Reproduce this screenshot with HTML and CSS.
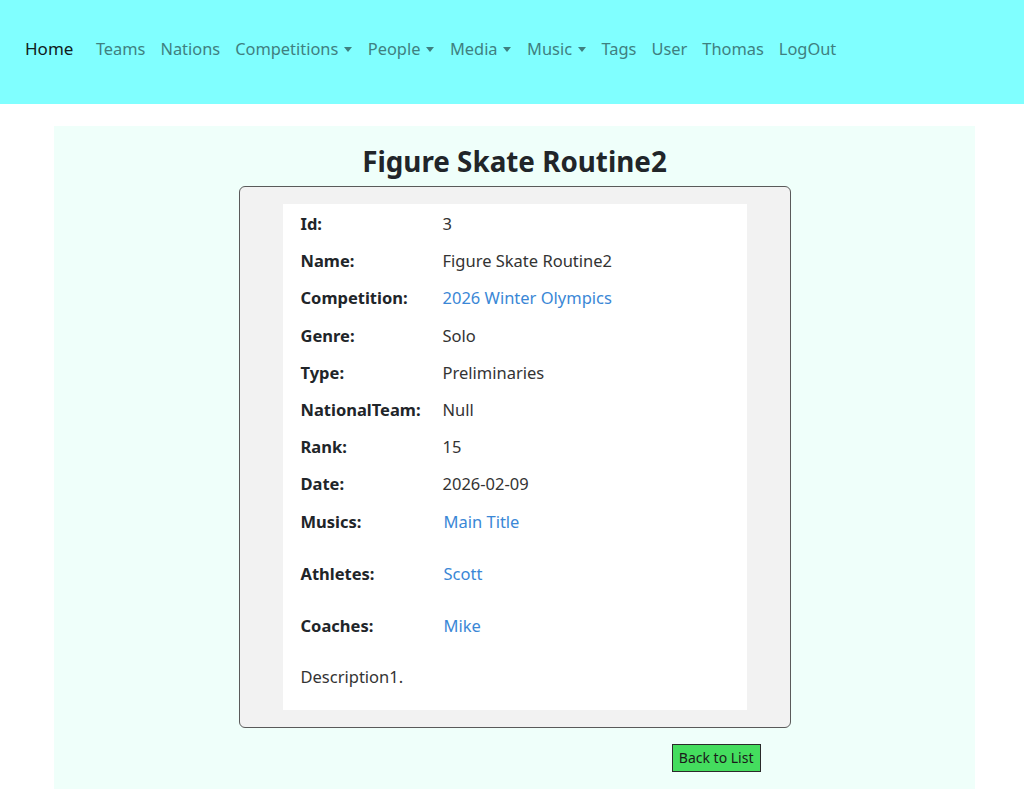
FILE: index.html
```html
<!DOCTYPE html>
<html lang="en">
<head>
<meta charset="utf-8">
<title>Figure Skate Routine2</title>
<link rel="stylesheet" href="styles.css">
</head>
<body>
<nav class="navbar">
  <a class="brand" href="#">Home</a>
  <a class="nav-link" href="#">Teams</a>
  <a class="nav-link" href="#">Nations</a>
  <a class="nav-link dropdown" href="#">Competitions</a>
  <a class="nav-link dropdown" href="#">People</a>
  <a class="nav-link dropdown" href="#">Media</a>
  <a class="nav-link dropdown" href="#">Music</a>
  <a class="nav-link" href="#">Tags</a>
  <a class="nav-link" href="#">User</a>
  <a class="nav-link" href="#">Thomas</a>
  <a class="nav-link" href="#">LogOut</a>
</nav>
<main class="container">
  <h2 class="title">Figure Skate Routine2</h2>
  <div class="card">
    <div class="details">
      <dl class="grid">
        <dt>Id:</dt><dd>3</dd>
        <dt>Name:</dt><dd>Figure Skate Routine2</dd>
        <dt>Competition:</dt><dd><a href="#">2026 Winter Olympics</a></dd>
        <dt>Genre:</dt><dd>Solo</dd>
        <dt>Type:</dt><dd>Preliminaries</dd>
        <dt>NationalTeam:</dt><dd>Null</dd>
        <dt>Rank:</dt><dd>15</dd>
        <dt>Date:</dt><dd>2026-02-09</dd>
        <dt class="tall">Musics:</dt><dd class="tall"><a class="item" href="#">Main Title</a></dd>
        <dt class="tall">Athletes:</dt><dd class="tall"><a class="item" href="#">Scott</a></dd>
        <dt class="tall">Coaches:</dt><dd class="tall"><a class="item" href="#">Mike</a></dd>
      </dl>
      <p class="description">Description1.</p>
    </div>
  </div>
  <div class="actions">
    <a class="btn-back" href="#">Back to List</a>
  </div>
</main>
</body>
</html>
```
FILE: styles.css
```css
* { box-sizing: border-box; }
html, body { margin: 0; padding: 0; }
body {
  font-family: "Noto Sans", "Open Sans", sans-serif;
  font-size: 16.5px;
  color: #212529;
  background: #ffffff;
}
a { text-decoration: none; }

.navbar {
  display: flex;
  align-items: center;
  height: 104px;
  padding-left: 25px;
  padding-bottom: 8px;
  background: #80ffff;
}
.brand {
  color: #102020;
  font-size: 17px;
  margin-right: 15px;
}
.nav-link {
  color: #3f8080;
  font-size: 16.4px;
  padding: 0 7.5px;
}
.dropdown::after {
  content: "";
  display: inline-block;
  margin-left: 5.5px;
  margin-right: 1px;
  vertical-align: 3px;
  border-top: 5px solid #3f8080;
  border-left: 4.5px solid transparent;
  border-right: 4.5px solid transparent;
}

.container {
  margin: 22px 49px 11px 54px;
  background: #effffa;
  padding: 14px 0 17px;
}
.title {
  margin: 0 0 3px;
  text-align: center;
  font-size: 27.8px;
  font-weight: 700;
  line-height: 43px;
  color: #212529;
}
.card {
  width: 552px;
  margin: 0 auto;
  background: #f2f2f2;
  border: 1px solid #5a5a5a;
  border-radius: 6px;
  padding: 17px 43px;
}
.details {
  background: #ffffff;
  padding: 1px 18px 16px;
}
.grid {
  display: grid;
  grid-template-columns: 142px 1fr;
  margin: 0;
}
.grid dt, .grid dd {
  margin: 0;
  height: 37.2px;
  line-height: 37px;
}
.grid dt { font-weight: 700; color: #212529; }
.grid dd { color: #333333; }
.grid dd a { color: #3a87d6; }
.grid .tall { height: 52.3px; }
.item { margin-left: 1px; }
.description {
  margin: 0;
  line-height: 35px;
  color: #333333;
}

.actions {
  width: 552px;
  margin: 16px auto 0;
  display: flex;
  justify-content: flex-end;
  padding-right: 30px;
}
.btn-back {
  display: inline-block;
  background: #44dd5e;
  border: 1px solid #2a2a2a;
  color: #1a1a1a;
  font-size: 14px;
  line-height: 26px;
  padding: 0 6px;
}
```
